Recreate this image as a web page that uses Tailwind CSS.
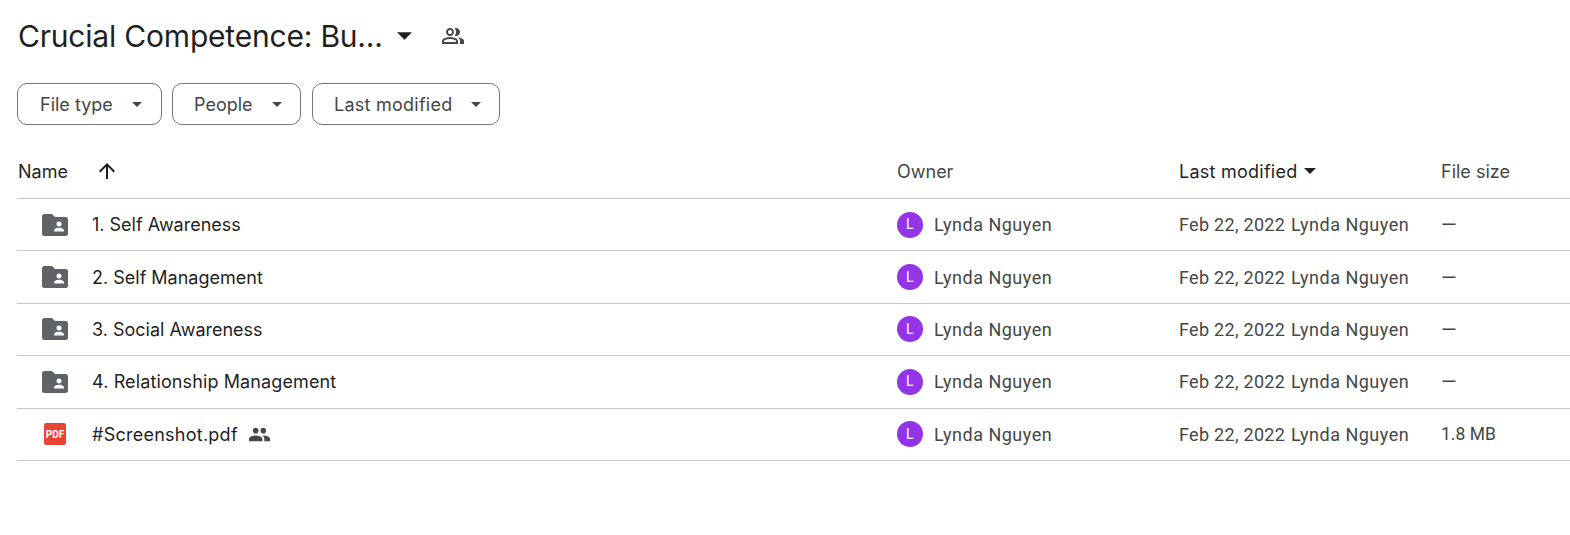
<!DOCTYPE html>
<html lang="en">
<head>
    <meta charset="UTF-8">
    <title>Crucial Competence</title>
    <script src="https://cdn.jsdelivr.net/npm/@tailwindcss/browser@4"></script>
</head>
<body class="bg-white w-[1570px] h-[535px] overflow-hidden font-['Inter',sans-serif] text-[#1f1f1f]">
    <div class="pl-[17px]">
        <!-- title -->
        <div class="h-[71px] flex items-center">
            <h1 class="ml-px text-[30px] tracking-[-0.2px] font-normal leading-none">Crucial Competence: Bu...</h1>
            <svg class="ml-[14px] w-[15px] h-[8px]" viewBox="0 0 16 8"><path d="M0 0h16L8 8z" fill="#1f1f1f"/></svg>
            <svg class="ml-[29px] w-[24px] h-[24px]" viewBox="0 -960 960 960" fill="#444746"><path d="M40-160v-112q0-34 17.500-62.500T104-378q62-31 126-46.500T360-440q66 0 130 15.500T616-378q29 15 46.500 43.500T680-272v112H40Zm720 0v-120q0-44-24.500-84.500T666-434q51 6 96 20.500t84 35.500q36 20 55 44.500t19 53.500v120H760ZM360-480q-66 0-113-47t-47-113q0-66 47-113t113-47q66 0 113 47t47 113q0 66-47 113t-113 47Zm400-160q0 66-47 113t-113 47q-11 0-28-2.500t-28-5.500q27-32 41.500-71t14.500-81q0-42-14.500-81T544-792q14-5 28-6.500t28-1.500q66 0 113 47t47 113ZM120-240h480v-32q0-11-5.500-20T580-306q-54-27-109-40.500T360-360q-56 0-111 13.500T140-306q-9 5-14.500 14t-5.500 20v32Zm240-320q33 0 56.500-23.500T440-640q0-33-23.500-56.500T360-720q-33 0-56.500 23.500T280-640q0 33 23.500 56.500T360-560Z"/></svg>
        </div>

        <!-- filter chips -->
        <div class="mt-[12px] flex text-[18px] text-[#444746]">
            <button class="w-[145px] h-[42px] mr-[10px] pl-[22px] pr-[19px] flex items-center justify-between border border-[#747775] rounded-[10px]"><span class="pt-[1px]">File type</span>
                <svg class="w-[10px] h-[5px]" viewBox="0 0 10 5"><path d="M0 0h10L5 5z" fill="#444746"/></svg>
            </button>
            <button class="w-[129px] h-[42px] mr-[11px] pl-[21px] pr-[18px] flex items-center justify-between border border-[#747775] rounded-[10px]"><span class="pt-[1px]">People</span>
                <svg class="w-[10px] h-[5px]" viewBox="0 0 10 5"><path d="M0 0h10L5 5z" fill="#444746"/></svg>
            </button>
            <button class="w-[188px] h-[42px] pl-[21px] pr-[18px] flex items-center justify-between border border-[#747775] rounded-[10px]"><span class="pt-[1px] tracking-[0.25px]">Last modified</span>
                <svg class="w-[10px] h-[5px]" viewBox="0 0 10 5"><path d="M0 0h10L5 5z" fill="#444746"/></svg>
            </button>
        </div>

        <!-- table head -->
        <div class="mt-[21px] h-[53px] pb-[2px] grid grid-cols-[880px_282px_262px_1fr] items-center border-b border-[#c7c7c7] text-[18px]">
            <div class="pl-[1px] flex items-center">Name
                <svg class="ml-[27px] w-[24px] h-[24px]" viewBox="0 0 24 24" fill="#1f1f1f"><path d="M4 12l1.410 1.410L11 7.830V20h2V7.830l5.580 5.590L20 12l-8-8-8 8z"/></svg>
            </div>
            <div class="text-[#444746]">Owner</div>
            <div class="flex items-center tracking-[0.25px]">Last modified
                <svg class="ml-[7px] w-[12px] h-[6px]" viewBox="0 0 12 6"><path d="M0 0h12L6 6z" fill="#1f1f1f"/></svg>
            </div>
            <div class="text-[#444746]">File size</div>
        </div>

        <!-- rows -->
        <div class="h-[52.4px] grid grid-cols-[880px_282px_262px_1fr] items-center border-b border-[#c7c7c7] text-[18px]">
            <div class="flex items-center">
                <svg class="ml-[25px] w-[26px] h-[22px]" viewBox="0 0 26 22"><path fill-rule="evenodd" d="M2.500 0h7.500l3 3h10.500a2.500 2.500 0 0 1 2.500 2.500v14a2.500 2.500 0 0 1-2.500 2.500h-21a2.500 2.500 0 0 1-2.500-2.500v-17a2.500 2.500 0 0 1 2.500-2.500zM17 7.500a2.500 2.500 0 1 0 0 5 2.500 2.500 0 0 0 0-5zM12 17.500h10v-1.200c0-1.600-3.300-2.500-5-2.500s-5 .9-5 2.500z" fill="#5f6368"/></svg>
                <span class="ml-[24px]">1. Self Awareness</span>
            </div>
            <div class="flex items-center text-[#444746] font-['Roboto',sans-serif] tracking-[0.5px]">
                <span class="w-[26px] h-[26px] rounded-full bg-[#9334e6] text-white text-[14px] flex items-center justify-center">L</span>
                <span class="ml-[11px]">Lynda Nguyen</span>
            </div>
            <div class="flex text-[#444746] font-['Roboto',sans-serif] tracking-[0.3px]"><span class="w-[112px]">Feb 22, 2022</span><span class="tracking-[0.5px]">Lynda Nguyen</span></div>
            <div class="pt-px text-[#444746] font-['Roboto',sans-serif] text-[20px]">—</div>
        </div>
        <div class="h-[52.4px] grid grid-cols-[880px_282px_262px_1fr] items-center border-b border-[#c7c7c7] text-[18px]">
            <div class="flex items-center">
                <svg class="ml-[25px] w-[26px] h-[22px]" viewBox="0 0 26 22"><path fill-rule="evenodd" d="M2.500 0h7.500l3 3h10.500a2.500 2.500 0 0 1 2.500 2.500v14a2.500 2.500 0 0 1-2.500 2.500h-21a2.500 2.500 0 0 1-2.500-2.500v-17a2.500 2.500 0 0 1 2.500-2.500zM17 7.500a2.500 2.500 0 1 0 0 5 2.500 2.500 0 0 0 0-5zM12 17.500h10v-1.200c0-1.600-3.300-2.500-5-2.500s-5 .9-5 2.500z" fill="#5f6368"/></svg>
                <span class="ml-[24px]">2. Self Management</span>
            </div>
            <div class="flex items-center text-[#444746] font-['Roboto',sans-serif] tracking-[0.5px]">
                <span class="w-[26px] h-[26px] rounded-full bg-[#9334e6] text-white text-[14px] flex items-center justify-center">L</span>
                <span class="ml-[11px]">Lynda Nguyen</span>
            </div>
            <div class="flex text-[#444746] font-['Roboto',sans-serif] tracking-[0.3px]"><span class="w-[112px]">Feb 22, 2022</span><span class="tracking-[0.5px]">Lynda Nguyen</span></div>
            <div class="pt-px text-[#444746] font-['Roboto',sans-serif] text-[20px]">—</div>
        </div>
        <div class="h-[52.4px] grid grid-cols-[880px_282px_262px_1fr] items-center border-b border-[#c7c7c7] text-[18px]">
            <div class="flex items-center">
                <svg class="ml-[25px] w-[26px] h-[22px]" viewBox="0 0 26 22"><path fill-rule="evenodd" d="M2.500 0h7.500l3 3h10.500a2.500 2.500 0 0 1 2.500 2.500v14a2.500 2.500 0 0 1-2.500 2.500h-21a2.500 2.500 0 0 1-2.500-2.500v-17a2.500 2.500 0 0 1 2.500-2.500zM17 7.500a2.500 2.500 0 1 0 0 5 2.500 2.500 0 0 0 0-5zM12 17.500h10v-1.200c0-1.600-3.300-2.500-5-2.500s-5 .9-5 2.500z" fill="#5f6368"/></svg>
                <span class="ml-[24px]">3. Social Awareness</span>
            </div>
            <div class="flex items-center text-[#444746] font-['Roboto',sans-serif] tracking-[0.5px]">
                <span class="w-[26px] h-[26px] rounded-full bg-[#9334e6] text-white text-[14px] flex items-center justify-center">L</span>
                <span class="ml-[11px]">Lynda Nguyen</span>
            </div>
            <div class="flex text-[#444746] font-['Roboto',sans-serif] tracking-[0.3px]"><span class="w-[112px]">Feb 22, 2022</span><span class="tracking-[0.5px]">Lynda Nguyen</span></div>
            <div class="pt-px text-[#444746] font-['Roboto',sans-serif] text-[20px]">—</div>
        </div>
        <div class="h-[52.4px] grid grid-cols-[880px_282px_262px_1fr] items-center border-b border-[#c7c7c7] text-[18px]">
            <div class="flex items-center">
                <svg class="ml-[25px] w-[26px] h-[22px]" viewBox="0 0 26 22"><path fill-rule="evenodd" d="M2.500 0h7.500l3 3h10.500a2.500 2.500 0 0 1 2.500 2.500v14a2.500 2.500 0 0 1-2.500 2.500h-21a2.500 2.500 0 0 1-2.500-2.500v-17a2.500 2.500 0 0 1 2.500-2.500zM17 7.500a2.500 2.500 0 1 0 0 5 2.500 2.500 0 0 0 0-5zM12 17.500h10v-1.200c0-1.600-3.300-2.500-5-2.500s-5 .9-5 2.500z" fill="#5f6368"/></svg>
                <span class="ml-[24px] tracking-[0.12px]">4. Relationship Management</span>
            </div>
            <div class="flex items-center text-[#444746] font-['Roboto',sans-serif] tracking-[0.5px]">
                <span class="w-[26px] h-[26px] rounded-full bg-[#9334e6] text-white text-[14px] flex items-center justify-center">L</span>
                <span class="ml-[11px]">Lynda Nguyen</span>
            </div>
            <div class="flex text-[#444746] font-['Roboto',sans-serif] tracking-[0.3px]"><span class="w-[112px]">Feb 22, 2022</span><span class="tracking-[0.5px]">Lynda Nguyen</span></div>
            <div class="pt-px text-[#444746] font-['Roboto',sans-serif] text-[20px]">—</div>
        </div>
        <div class="h-[52.4px] grid grid-cols-[880px_282px_262px_1fr] items-center border-b border-[#c7c7c7] text-[18px]">
            <div class="flex items-center">
                <span class="ml-[27px] w-[22px] h-[22px] rounded-[2px] bg-[#ea4335] text-white font-['Roboto',sans-serif] text-[10px] font-bold flex items-center justify-center">PDF</span>
                <span class="ml-[26px] tracking-[0.25px]">#Screenshot.pdf</span>
                <svg class="ml-[10px] w-[23px] h-[23px]" viewBox="0 0 24 24" fill="#444746"><path d="M16 11c1.660 0 2.990-1.340 2.990-3S17.660 5 16 5c-1.660 0-3 1.340-3 3s1.340 3 3 3zm-8 0c1.660 0 2.990-1.340 2.990-3S9.660 5 8 5C6.340 5 5 6.340 5 8s1.340 3 3 3zm0 2c-2.330 0-7 1.170-7 3.500V19h14v-2.500c0-2.330-4.670-3.500-7-3.500zm8 0c-.29 0-.62.02-.97.05 1.160.84 1.970 1.970 1.970 3.450V19h6v-2.500c0-2.330-4.670-3.500-7-3.500z"/></svg>
            </div>
            <div class="flex items-center text-[#444746] font-['Roboto',sans-serif] tracking-[0.5px]">
                <span class="w-[26px] h-[26px] rounded-full bg-[#9334e6] text-white text-[14px] flex items-center justify-center">L</span>
                <span class="ml-[11px]">Lynda Nguyen</span>
            </div>
            <div class="flex text-[#444746] font-['Roboto',sans-serif] tracking-[0.3px]"><span class="w-[112px]">Feb 22, 2022</span><span class="tracking-[0.5px]">Lynda Nguyen</span></div>
            <div class="text-[#444746] font-['Roboto',sans-serif] text-[17.5px]">1.8 MB</div>
        </div>
    </div>
</body>
</html>
